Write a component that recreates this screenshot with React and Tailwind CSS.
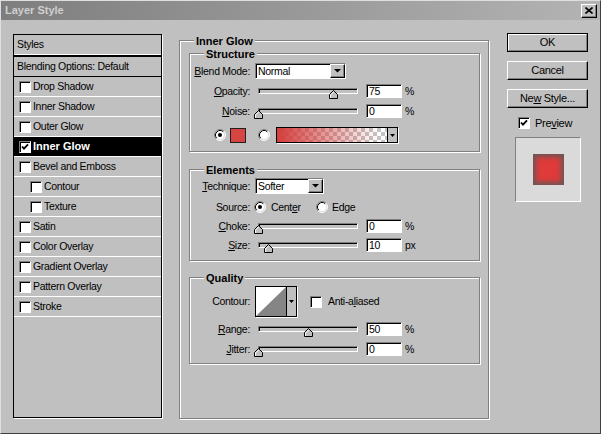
import React from "react";

const sunken =
  "border border-t-[#808080] border-l-[#808080] border-b-white border-r-white shadow-[inset_1px_1px_0_#000]";

const effects = [
  { name: "Drop Shadow" },
  { name: "Inner Shadow" },
  { name: "Outer Glow" },
  { name: "Inner Glow", active: true },
  { name: "Bevel and Emboss" },
  { name: "Contour", sub: true },
  { name: "Texture", sub: true },
  { name: "Satin" },
  { name: "Color Overlay" },
  { name: "Gradient Overlay" },
  { name: "Pattern Overlay" },
  { name: "Stroke" },
];

function Check({ checked }) {
  return (
    <span
      className={`flex h-[12px] w-[12px] shrink-0 items-center justify-center bg-white ${sunken}`}
    >
      {checked && (
        <svg width="8" height="8" viewBox="0 0 8 8">
          <path d="M1 3.5 L3 5.7 L7 1.3" fill="none" stroke="#000" strokeWidth="1.8" />
        </svg>
      )}
    </span>
  );
}

function Radio({ on }) {
  return (
    <svg width="12" height="12" viewBox="0 0 12 12" className="shrink-0">
      <circle cx="6" cy="6" r="5" fill="#fff" />
      <path d="M2.11 9.89 A5.5 5.5 0 0 1 9.89 2.11" fill="none" stroke="#808080" />
      <path d="M9.89 2.11 A5.5 5.5 0 0 1 2.11 9.89" fill="none" stroke="#fff" />
      <path d="M2.82 9.18 A4.5 4.5 0 0 1 9.18 2.82" fill="none" stroke="#000" />
      <path d="M9.18 2.82 A4.5 4.5 0 0 1 2.82 9.18" fill="none" stroke="#dfdfdf" />
      {on && <circle cx="6" cy="6" r="2" fill="#000" />}
    </svg>
  );
}

function Arrow() {
  return (
    <svg width="7" height="4" viewBox="0 0 7 4">
      <polygon points="0,0 7,0 3.5,3.5" fill="#000" />
    </svg>
  );
}

function Select({ className, value }) {
  return (
    <div className={`flex h-[16px] items-center bg-white ${sunken} ${className}`}>
      <span className="flex-1 pl-[2px]">{value}</span>
      <span className="flex h-[14px] w-[15px] items-center justify-center border border-t-white border-l-white border-b-black border-r-black bg-[#c0c0c0] shadow-[inset_-1px_-1px_0_#808080]">
        <Arrow />
      </span>
    </div>
  );
}

function Slider({ pos }) {
  return (
    <div className="relative ml-[8px] h-[14px] w-[100px] shrink-0">
      <div className={`mt-[4px] h-[6px] w-[100px] bg-[#c0c0c0] ${sunken}`} />
      <svg
        className="absolute top-[6px]"
        style={{ left: pos - 4 }}
        width="9"
        height="9"
        viewBox="0 0 9 9"
      >
        <polygon points="4.5,0.5 8.5,4.5 8.5,8.5 0.5,8.5 0.5,4.5" fill="#c0c0c0" stroke="#000" />
        <polyline points="1.5,8 1.5,5 4.5,2" fill="none" stroke="#fff" />
      </svg>
    </div>
  );
}

function Field({ value }) {
  return (
    <div className={`ml-[8px] flex h-[14px] w-[36px] items-center bg-white pl-[2px] ${sunken}`}>
      {value}
    </div>
  );
}

function Label({ children }) {
  return <span className="w-[60px] shrink-0 text-right">{children}</span>;
}

function U({ children }) {
  return <span className="underline underline-offset-[1px]">{children}</span>;
}

function SliderRow({ label, pos, value, unit, className }) {
  return (
    <div className={`flex h-[14px] items-center ${className}`}>
      <Label>{label}</Label>
      <Slider pos={pos} />
      <Field value={value} />
      <span className="ml-[3px]">{unit}</span>
    </div>
  );
}

function Group({ title, className, children }) {
  return (
    <div
      className={`flex flex-col border border-[#808080] shadow-[1px_1px_0_#fff,inset_1px_1px_0_#fff] ${className}`}
    >
      <div className="-mt-[7px] ml-[14px] h-[14px] w-fit bg-[#c0c0c0] px-[2px] text-[11px] font-bold leading-[14px] tracking-normal">
        {title}
      </div>
      {children}
    </div>
  );
}

function Button({ children, isDefault, className }) {
  if (isDefault) {
    return (
      <div className={`h-[19px] w-[81px] border border-black ${className}`}>
        <div className="flex h-full w-full items-center justify-center border border-t-white border-l-white border-b-[#808080] border-r-[#808080] text-[11px]">
          <span>{children}</span>
        </div>
      </div>
    );
  }
  return (
    <div
      className={`flex h-[19px] w-[81px] items-center justify-center border border-t-white border-l-white border-b-black border-r-black text-[11px] shadow-[inset_-1px_-1px_0_#808080] ${className}`}
    >
      <span>{children}</span>
    </div>
  );
}

export default function App() {
  return (
    <div className="flex h-[434px] w-[601px] flex-col border border-t-[#dfdfdf] border-l-[#dfdfdf] border-b-[#404040] border-r-[#404040] bg-[#c0c0c0] font-['Liberation_Sans',Arial,sans-serif] text-[10.5px] leading-none tracking-[-0.3px] text-black">
      {/* title bar */}
      <div className="flex h-[19px] shrink-0 items-center bg-linear-to-r from-[#7e7e7e] to-[#b4b4b4] pl-[4px]">
        <span className="flex-1 text-[11px] font-bold tracking-normal text-[#cfcfcf]">Layer Style</span>
        <div className="mr-[3px] flex h-[14px] w-[16px] items-center justify-center border border-t-white border-l-white border-b-black border-r-black bg-[#c0c0c0] shadow-[inset_-1px_-1px_0_#808080]">
          <svg width="8" height="7" viewBox="0 0 8 7">
            <path d="M0.5 0.5 L7.5 6.5 M7.5 0.5 L0.5 6.5" stroke="#000" strokeWidth="1.6" />
          </svg>
        </div>
      </div>

      <div className="flex flex-1 items-start">
        {/* styles list */}
        <div className="ml-[12px] mt-[14px] flex h-[384px] w-[149px] flex-col border border-black shadow-[1px_1px_0_#fff]">
          <div className="flex h-[20px] shrink-0 items-center border-b border-white pl-[3px]">Styles</div>
          <div className="h-[2px] shrink-0 bg-black" />
          <div className="flex h-[20px] shrink-0 items-center border-b border-black pl-[3px]">
            Blending Options: Default
          </div>
          {effects.map((e) => (
            <div
              key={e.name}
              className={`flex h-[20px] shrink-0 items-center gap-[2px] border-b border-white ${
                e.sub ? "pl-[16px]" : "pl-[5px]"
              } ${e.active ? "bg-black text-[11px] font-bold tracking-normal text-white" : ""}`}
            >
              <Check checked={e.active} />
              <span>{e.name}</span>
            </div>
          ))}
        </div>

        {/* settings */}
        <Group title="Inner Glow" className="ml-[17px] mt-[20px] h-[379px] w-[310px]">
          <Group title="Structure" className="ml-[9px] mt-[5px] h-[99px] w-[291px]">
            <div className="mt-[2px] flex h-[16px] items-center">
              <Label>
                <U>B</U>lend Mode:
              </Label>
              <Select className="ml-[5px] w-[91px]" value="Normal" />
            </div>
            <SliderRow
              className="mt-[5px]"
              label={
                <>
                  <U>O</U>pacity:
                </>
              }
              pos={75}
              value="75"
              unit="%"
            />
            <SliderRow
              className="mt-[6px]"
              label={
                <>
                  <U>N</U>oise:
                </>
              }
              pos={0}
              value="0"
              unit="%"
            />
            <div className="ml-[24px] mt-[9px] flex h-[16px] items-center">
              <Radio on />
              <span className="ml-[4px] h-[15px] w-[16px] border border-[#202020] bg-[#d64541]" />
              <span className="ml-[12px]">
                <Radio />
              </span>
              <div className="ml-[6px] flex h-[16px] w-[122px] border border-black shadow-[1px_1px_0_#fff]">
                <span className="flex-1 bg-[linear-gradient(to_right,#d43d3d,#d43d3d00_92%),repeating-conic-gradient(#c4c4c4_0_25%,#ffffff_0_50%)] [background-size:100%_100%,8px_8px]" />
                <span className="flex w-[10px] items-center justify-center border-l border-black bg-[#c0c0c0]">
                  <svg width="5" height="3" viewBox="0 0 5 3">
                    <polygon points="0,0 5,0 2.5,3" fill="#000" />
                  </svg>
                </span>
              </div>
            </div>
          </Group>

          <Group title="Elements" className="ml-[9px] mt-[17px] h-[92px] w-[291px]">
            <div className="mt-[1px] flex h-[16px] items-center">
              <Label>
                <U>T</U>echnique:
              </Label>
              <Select className="ml-[5px] w-[69px]" value="Softer" />
            </div>
            <div className="mt-[7px] flex h-[12px] items-center">
              <Label>Source:</Label>
              <span className="ml-[4px]">
                <Radio on />
              </span>
              <span className="ml-[5px] w-[45px]">
                Cent<U>e</U>r
              </span>
              <Radio />
              <span className="ml-[4px]">
                Ed<U>g</U>e
              </span>
            </div>
            <SliderRow
              className="mt-[6px]"
              label={
                <>
                  <U>C</U>hoke:
                </>
              }
              pos={0}
              value="0"
              unit="%"
            />
            <SliderRow
              className="mt-[5px]"
              label={
                <>
                  <U>S</U>ize:
                </>
              }
              pos={10}
              value="10"
              unit="px"
            />
          </Group>

          <Group title="Quality" className="ml-[9px] mt-[16px] h-[87px] w-[291px]">
            <div className="mt-[1px] flex h-[31px] items-center">
              <Label>Contour:</Label>
              <div className="ml-[5px] flex h-[31px] w-[42px] border border-black shadow-[1px_1px_0_#fff]">
                <svg width="30" height="29" viewBox="0 0 30 29" className="shrink-0">
                  <rect width="30" height="29" fill="#fff" />
                  <polygon points="0,29 30,0 30,29" fill="#858585" />
                </svg>
                <span className="flex flex-1 items-center justify-center border-l border-black bg-[#c0c0c0]">
                  <svg width="5" height="3" viewBox="0 0 5 3">
                    <polygon points="0,0 5,0 2.5,3" fill="#000" />
                  </svg>
                </span>
              </div>
              <span className="ml-[13px]">
                <Check />
              </span>
              <span className="ml-[6px]">
                Anti-a<U>l</U>iased
              </span>
            </div>
            <SliderRow
              className="mt-[5px]"
              label={
                <>
                  <U>R</U>ange:
                </>
              }
              pos={50}
              value="50"
              unit="%"
            />
            <SliderRow
              className="mt-[6px]"
              label={
                <>
                  <U>J</U>itter:
                </>
              }
              pos={0}
              value="0"
              unit="%"
            />
          </Group>
        </Group>

        {/* buttons */}
        <div className="ml-[18px] mt-[13px] flex flex-col">
          <Button isDefault>OK</Button>
          <Button className="mt-[9px]">Cancel</Button>
          <Button className="mt-[9px]">
            Ne<U>w</U> Style...
          </Button>
          <div className="ml-[11px] mt-[9px] flex h-[12px] items-center">
            <Check checked />
            <span className="ml-[5px] text-[11px]">
              Pre<U>v</U>iew
            </span>
          </div>
          <div className="ml-[8px] mt-[8px] flex h-[65px] w-[66px] items-center justify-center border border-t-[#808080] border-l-[#808080] border-b-white border-r-white bg-[#dadada]">
            <div className="h-[31px] w-[31px] bg-[#e03a3a] shadow-[inset_0_0_5px_3px_#6d5656]" />
          </div>
        </div>
      </div>
    </div>
  );
}
